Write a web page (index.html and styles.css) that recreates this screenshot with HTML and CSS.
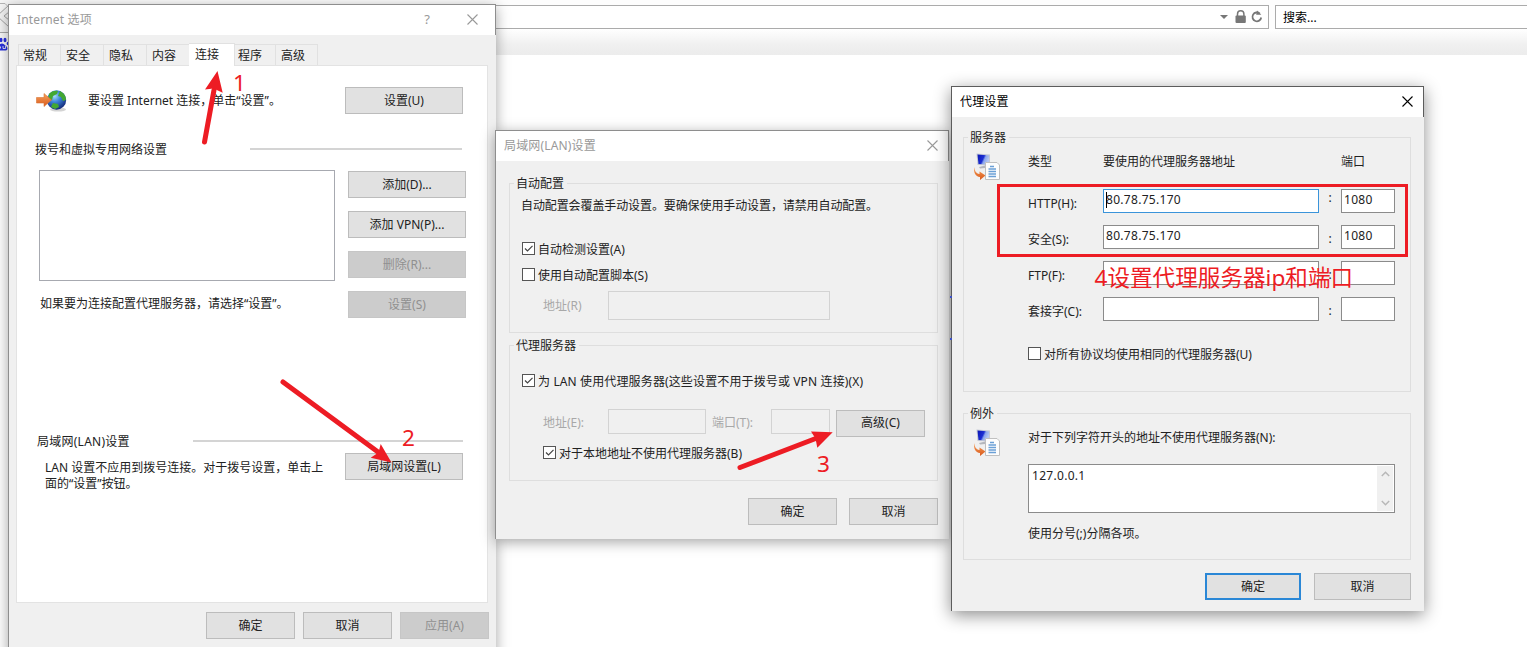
FILE: index.html
```html
<!DOCTYPE html>
<html lang="zh-CN">
<head>
  <meta charset="UTF-8">
  <title>Internet 选项</title>
  <link rel="stylesheet" href="styles.css">
</head>
<body>

  <svg class="defs" width="0" height="0">
    <defs>
      <linearGradient id="screen" x1="0" y1="0" x2="1" y2="0.4">
        <stop offset="0" stop-color="#0a14b4"/>
        <stop offset="0.55" stop-color="#1c2fd2"/>
        <stop offset="0.7" stop-color="#8ba6ec"/>
        <stop offset="1" stop-color="#b3c6f2"/>
      </linearGradient>
      <linearGradient id="orange" x1="0" y1="0" x2="0" y2="1">
        <stop offset="0" stop-color="#f6a25c"/>
        <stop offset="1" stop-color="#d9591c"/>
      </linearGradient>
      <radialGradient id="globe" cx="0.4" cy="0.3" r="0.75">
        <stop offset="0" stop-color="#a8dcf8"/>
        <stop offset="0.4" stop-color="#3d86dc"/>
        <stop offset="1" stop-color="#10206f"/>
      </radialGradient>
      <symbol id="proxy" viewBox="0 0 28 28">
        <path d="M3.500 0.500L17 1.500V12.500L4.500 12Z" fill="#c3c8d4"/>
        <path d="M4.500 1.500L16 2.500V11.500L5.500 11Z" fill="url(#screen)"/>
        <path d="M6 14L12 12.500V15L7 15.500Z" fill="#b4b7bd"/>
        <path d="M1.500 14C1.500 18 3 20.500 6.500 21V18.500L12.500 22.500L7 27V24C2.500 23.500 0 19 1.500 14Z" fill="url(#orange)"/>
        <path d="M12.500 9.500H24L26.500 12V26.500H12.500Z" fill="#fdfdfd" stroke="#c0c0c0"/>
        <path d="M17 13.500H21M15.500 16H23M15.500 18.500H23M15.500 21H23M15.500 23.500H23" stroke="#6ba0d6" stroke-width="1.700"/>
      </symbol>
      <symbol id="close" viewBox="0 0 11 11">
        <path d="M0.500 0.500L10.500 10.500M10.500 0.500L0.500 10.500" fill="none" stroke="currentColor" stroke-width="1.100"/>
      </symbol>
      <symbol id="check" viewBox="0 0 11 11">
        <path d="M2 5.500L4.500 8L9.500 2.800" fill="none" stroke="#444" stroke-width="1.200"/>
      </symbol>
    </defs>
  </svg>

  <!-- Browser behind the dialogs -->
  <div class="browser">
    <div class="toolbar">
      <div class="address">
        <svg width="44" height="16" viewBox="0 0 44 16">
          <path d="M0 6H8L4 10Z" fill="#777"/>
          <path d="M17.500 7V5A3.200 3.200 0 0 1 23.900 5V7" fill="none" stroke="#777" stroke-width="1.500"/>
          <rect x="15.500" y="6.500" width="10.300" height="7.500" rx="1" fill="#777"/>
          <path d="M39.800 4.600A4.400 4.400 0 1 0 41.200 8.500" fill="none" stroke="#777" stroke-width="1.800"/>
          <path d="M37 1.500L41.300 5.800H36.200Z" fill="#777"/>
        </svg>
      </div>
      <div class="search">搜索...</div>
    </div>
    <div class="favorites"></div>
  </div>
  <svg class="nav-button" width="30" height="60" viewBox="0 0 30 60">
    <path d="M0 3.500H5L22 20.500" fill="none" stroke="#b5b5b5"/>
    <path d="M9 5L-3 16L9 27" fill="none" stroke="#a5a5a5"/>
    <path d="M9 12L4 16L9 20" fill="none" stroke="#a5a5a5"/>
    <path d="M0 32.500H9" stroke="#aaa"/>
    <g fill="#2a32df">
      <ellipse cx="1" cy="40" rx="1.500" ry="2.200"/>
      <ellipse cx="5" cy="40" rx="1.500" ry="2.200"/>
      <ellipse cx="8" cy="43.500" rx="1.300" ry="1.800"/>
      <path d="M0 44C3 42.500 4 44.500 6 46C9 48.500 7 51 4.500 50.500H0Z"/>
    </g>
    <path d="M0.500 46.500V48.500M3 46V48.500H5.500V46" fill="none" stroke="#fff" stroke-width="0.800"/>
  </svg>

  <!-- Internet options -->
  <div class="window options">
    <div class="titlebar">
      <span class="title">Internet 选项</span>
      <span class="help">?</span>
      <svg class="close" width="11" height="11"><use href="#close"/></svg>
    </div>
    <div class="tabs">
      <div class="tab">常规</div>
      <div class="tab">安全</div>
      <div class="tab">隐私</div>
      <div class="tab">内容</div>
      <div class="tab active">连接</div>
      <div class="tab">程序</div>
      <div class="tab">高级</div>
    </div>
    <div class="panel">
      <div class="setup">
        <svg width="32" height="24" viewBox="0 0 32 24">
          <ellipse cx="22" cy="20.500" rx="8" ry="2" fill="#aaa" opacity="0.500"/>
          <circle cx="20.500" cy="11" r="9.700" fill="url(#globe)"/>
          <path d="M13 5C15 2 20 1 22 2L21 5L17 7L16 11L12 10ZM24 2C28 4 30 7 30 11L27 12L25 8L22 7ZM17 14L22 15L23 18L19 20L15 18Z" fill="#43a832"/>
          <path d="M0.500 8.500H8V4.500L15.500 11L8 17.500V14H0.500Z" fill="url(#orange)" stroke="#d87434" stroke-width="0.600"/>
        </svg>
        <span class="setup-text">要设置 Internet 连接，单击“设置”。</span>
        <button>设置(U)</button>
      </div>
      <div class="heading dialup">拨号和虚拟专用网络设置<i></i></div>
      <div class="connections">
        <div class="left">
          <div class="listbox"></div>
          <p>如果要为连接配置代理服务器，请选择“设置”。</p>
        </div>
        <div class="stack">
          <button>添加(D)...</button>
          <button>添加 VPN(P)...</button>
          <button disabled>删除(R)...</button>
          <button disabled>设置(S)</button>
        </div>
      </div>
      <div class="heading lan-heading">局域网(LAN)设置<i></i></div>
      <div class="lan-row">
        <p>LAN 设置不应用到拨号连接。对于拨号设置，单击上<br>面的“设置”按钮。</p>
        <button>局域网设置(L)</button>
      </div>
    </div>
    <div class="buttons">
      <button>确定</button>
      <button>取消</button>
      <button disabled>应用(A)</button>
    </div>
  </div>

  <!-- LAN settings -->
  <div class="window lan">
    <div class="titlebar">
      <span class="title">局域网(LAN)设置</span>
      <svg class="close" width="11" height="11"><use href="#close"/></svg>
    </div>
    <div class="content">
      <fieldset class="auto">
        <legend>自动配置</legend>
        <p>自动配置会覆盖手动设置。要确保使用手动设置，请禁用自动配置。</p>
        <div class="option detect"><span class="box"><svg width="11" height="11"><use href="#check"/></svg></span>自动检测设置(A)</div>
        <div class="option script"><span class="box"></span>使用自动配置脚本(S)</div>
        <div class="field script-field"><label>地址(R)</label><span class="input off"></span></div>
      </fieldset>
      <fieldset class="proxy">
        <legend>代理服务器</legend>
        <div class="option use-proxy"><span class="box"><svg width="11" height="11"><use href="#check"/></svg></span>为 LAN 使用代理服务器(这些设置不用于拨号或 VPN 连接)(X)</div>
        <div class="field proxy-field">
          <label>地址(E):</label><span class="input off host"></span>
          <label class="port-label">端口(T):</label><span class="input off port"></span>
          <button>高级(C)</button>
        </div>
        <div class="option local"><span class="box"><svg width="11" height="11"><use href="#check"/></svg></span>对于本地地址不使用代理服务器(B)</div>
      </fieldset>
      <div class="buttons">
        <button>确定</button>
        <button>取消</button>
      </div>
    </div>
  </div>

  <!-- Proxy settings -->
  <div class="window servers">
    <div class="titlebar">
      <span class="title">代理设置</span>
      <svg class="close" width="11" height="11"><use href="#close"/></svg>
    </div>
    <div class="content">
      <fieldset class="server-set">
        <legend>服务器</legend>
        <div class="with-icon">
          <svg width="28" height="28"><use href="#proxy"/></svg>
          <div class="main">
            <div class="grid">
              <span>类型</span><span>要使用的代理服务器地址</span><span></span><span>端口</span>
            </div>
            <div class="grid row">
              <span class="name">HTTP(H):</span><span class="input focus"><i class="caret"></i>80.78.75.170</span><span class="colon up">:</span><span class="input">1080</span>
            </div>
            <div class="grid row">
              <span class="name">安全(S):</span><span class="input">80.78.75.170</span><span class="colon">:</span><span class="input">1080</span>
            </div>
            <div class="grid row">
              <span class="name">FTP(F):</span><span class="input"></span><span class="colon">:</span><span class="input"></span>
            </div>
            <div class="grid row">
              <span class="name">套接字(C):</span><span class="input"></span><span class="colon">:</span><span class="input"></span>
            </div>
            <div class="option same"><span class="box"></span>对所有协议均使用相同的代理服务器(U)</div>
          </div>
        </div>
      </fieldset>
      <fieldset class="except">
        <legend>例外</legend>
        <div class="with-icon">
          <svg width="28" height="28"><use href="#proxy"/></svg>
          <div class="main">
            <p>对于下列字符开头的地址不使用代理服务器(N):</p>
            <div class="textarea">
              <span>127.0.0.1</span>
              <div class="scroll">
                <svg width="9" height="6" viewBox="0 0 9 6"><path d="M0.800 5L4.500 1.300L8.200 5" fill="none" stroke="#b8b8b8" stroke-width="1.500"/></svg>
                <svg width="9" height="6" viewBox="0 0 9 6"><path d="M0.800 1L4.500 4.700L8.200 1" fill="none" stroke="#b8b8b8" stroke-width="1.500"/></svg>
              </div>
            </div>
            <p>使用分号(;)分隔各项。</p>
          </div>
        </div>
      </fieldset>
      <div class="buttons">
        <button class="default">确定</button>
        <button>取消</button>
      </div>
    </div>
  </div>

  <!-- Step markers -->
  <svg class="marks" width="1527" height="647" viewBox="0 0 1527 647">
    <path d="M950 297H952M950 339H952" stroke="#3a4fc4" stroke-width="2"/>
    <g stroke="#ed1c24" stroke-width="5" stroke-linecap="round">
      <path d="M204.500 142L214 90"/>
      <path d="M283 382L378 452"/>
      <path d="M740 467.500L817 438"/>
    </g>
    <g fill="#ed1c24">
      <path d="M217.500 71L205 89.500L213.500 88.500L222.700 92.700Z"/>
      <path d="M391.500 462.500L380.700 444L378.500 452.500L370.700 457.700Z"/>
      <path d="M832.700 432.300L811 431.500L815.500 438.500L817.300 447.700Z"/>
    </g>
    <rect x="998.500" y="185.500" width="408" height="70" fill="none" stroke="#ed1c24" stroke-width="3"/>
    <g class="mark-text">
      <text x="233" y="90.500">1</text>
      <text x="402" y="446">2</text>
      <text x="817" y="471.500">3</text>
      <text x="1094.500" y="286">4设置代理服务器ip和端口</text>
    </g>
  </svg>

</body>
</html>
```
FILE: styles.css
```css
* {
  box-sizing: border-box;
}

body {
  margin: 0;
  width: 1527px;
  height: 647px;
  overflow: hidden;
  position: relative;
  background: #fff;
  color: #222;
  font-family: "Noto Sans", "Noto Sans CJK SC", sans-serif;
  font-size: 12px;
  line-height: 16px;
}

p {
  margin: 0;
}

.defs {
  position: absolute;
}

/* browser */
.toolbar {
  display: flex;
  gap: 6px;
  height: 29px;
  padding-top: 5px;
  background: #fdfdfd;
}

.address,
.search {
  height: 24px;
  border: 1px solid #ababab;
  background: #fff;
}

.address {
  width: 1269px;
  display: flex;
  justify-content: flex-end;
  align-items: center;
  padding-right: 4px;
}

.search {
  flex: 1;
  border-right: 0;
  padding-left: 7px;
  line-height: 23px;
  color: #000;
}

.favorites {
  height: 26px;
  background: linear-gradient(#fff, #f0f0f0 60%, #ececec);
}

.nav-button {
  position: absolute;
  left: 0;
  top: 0;
  background: linear-gradient(#f6f6f6 0, #f6f6f6 32px, #fafafa 33px, #fff 60px);
}

/* windows */
.window {
  position: absolute;
  background: #f0f0f0;
  border-left: 1px solid #8e8e8e;
  box-shadow: 0 3px 13px rgba(0, 0, 0, 0.36);
}

.titlebar {
  height: 31px;
  display: flex;
  align-items: center;
  background: #fff;
  border-top: 1px solid #8e8e8e;
  border-right: 1px solid #8e8e8e;
  padding: 0 10px 0 8px;
  color: #999;
}

.title {
  flex: 1;
  letter-spacing: 0.15px;
}

.close {
  margin-bottom: 2px;
}

.help {
  font-size: 13px;
  margin: 0 37px 2px 0;
}

button {
  width: 89px;
  height: 27px;
  padding: 0;
  border: 1px solid #bcbcbc;
  border-radius: 0;
  background: #e1e1e1;
  color: #222;
  font: inherit;
  line-height: 16px;
}

button:disabled {
  background: #ccc;
  border-color: #c6c6c6;
  color: #909090;
}

button.default {
  border: 2px solid #2a87d6;
}

.buttons {
  display: flex;
  justify-content: flex-end;
}

/* internet options */
.options {
  left: 8px;
  top: 4px;
  width: 488px;
  height: 660px;
}

.options .titlebar {
  padding-right: 17px;
}

.tabs {
  display: flex;
  align-items: flex-end;
  height: 30px;
  padding-left: 9px;
}

.tab {
  width: 43px;
  height: 21px;
  border: 1px solid #e1e1e1;
  border-left-width: 0;
  border-bottom: 0;
  padding-left: 5px;
  line-height: 21px;
}

.tab:first-child {
  border-left-width: 1px;
  padding-left: 4px;
}

.tab.active {
  width: 46px;
  height: 23px;
  margin: 0 -2px -1px -1px;
  padding-left: 6px;
  background: #fff;
  position: relative;
}

.tab:last-child {
  width: 42px;
}

.panel {
  margin-left: 7px;
  width: 472px;
  height: 538px;
  border: 1px solid #e3e3e3;
  background: #fff;
  padding: 21px 21px 0 18px;
}

.setup {
  display: flex;
  align-items: center;
  height: 27px;
}

.setup svg {
  margin-left: 1px;
}

.setup-text {
  flex: 1;
  margin: 1px 0 0 20px;
}

.setup button,
.lan-row button {
  width: 118px;
  margin-right: 3px;
}

.heading {
  display: flex;
  align-items: center;
  justify-content: space-between;
}

.heading i {
  height: 2px;
  margin-bottom: 2px;
  background: #d4d4d4;
}

.dialup {
  margin-top: 28px;
}

.dialup i {
  width: 212px;
  margin-right: 4px;
}

.connections {
  display: flex;
  justify-content: space-between;
  margin-top: 12px;
}

.left {
  padding-left: 4px;
}

.left p {
  margin: 15px 0 0 1px;
}

.listbox {
  width: 296px;
  height: 111px;
  border: 1px solid #a7a9b0;
}

.stack {
  display: flex;
  flex-direction: column;
  gap: 13px;
  padding-top: 1px;
}

.stack button {
  width: 118px;
}

.lan-heading {
  margin: 116px 3px 0 2px;
  letter-spacing: 0.25px;
}

.lan-heading i {
  width: 270px;
}

.lan-row {
  display: flex;
  justify-content: space-between;
  margin: 3px 0 0 10px;
}

.lan-row p {
  margin-top: 7px;
}

.options > .buttons {
  gap: 8px;
  padding: 9px 7px 0 0;
}

/* fieldsets */
.content {
  padding: 14px 11px 0 13px;
}

fieldset {
  margin: 0;
  padding: 0;
  border: 1px solid #dedede;
  min-width: 0;
}

legend {
  margin-left: 4px;
  padding: 0 3px 0 2px;
  height: 16px;
  line-height: 18px;
}

/* label sits a pixel below its box */
.option {
  display: flex;
  align-items: flex-end;
  height: 17px;
  gap: 3px;
}

.box {
  align-self: flex-start;
  width: 13px;
  height: 13px;
  margin-top: 1px;
  border: 1px solid #555;
  background: #fff;
  display: flex;
}

.input {
  display: block;
  height: 24px;
  border: 1px solid #8b8b8b;
  background: #fff;
  padding-left: 2px;
  line-height: 20px;
  letter-spacing: 0.3px;
}

.input.off {
  background: #f0f0f0;
  border-color: #d3d3d3;
}

.input.focus {
  border-color: #3a94da;
  position: relative;
}

.caret {
  position: absolute;
  left: 2px;
  top: 2px;
  width: 1px;
  height: 16px;
  background: #000;
}

.field {
  display: flex;
  align-items: center;
  padding-left: 33px;
}

.field label {
  width: 65px;
  color: #a8a8a8;
}

/* lan settings */
.lan {
  left: 495px;
  top: 130px;
  width: 454px;
  height: 409px;
}

.auto {
  height: 158px;
}

.auto p {
  margin: 7px 0 0 11px;
  letter-spacing: -0.1px;
}

.detect {
  margin: 27px 0 0 12px;
}

.script {
  margin: 9px 0 0 12px;
}

.script-field {
  margin-top: 7px;
}

.script-field .input {
  width: 222px;
  height: 29px;
}

.proxy {
  height: 144px;
  margin-top: 4px;
}

.use-proxy {
  margin: 20px 0 0 12px;
  letter-spacing: 0.13px;
}

.proxy-field {
  margin-top: 19px;
  height: 28px;
}

.proxy-field .input {
  height: 25px;
  margin-bottom: 3px;
}

.proxy-field .host {
  width: 98px;
}

.proxy-field .port {
  width: 59px;
}

.proxy-field .port-label {
  width: 59px;
  margin-left: 6px;
}

.proxy-field button {
  margin-left: 6px;
}

.local {
  margin: 8px 0 0 33px;
}

.lan .buttons {
  gap: 12px;
  margin-top: 17px;
}

/* proxy settings */
.servers {
  left: 951px;
  top: 86px;
  width: 473px;
  height: 525px;
  border-color: #5c5c5c;
  box-shadow: 0 4px 16px rgba(0, 0, 0, 0.45);
}

.servers .titlebar {
  border-color: #5c5c5c;
  color: #000;
}

.servers .content {
  padding: 12px 13px 0 11px;
}

.server-set {
  height: 263px;
}

.with-icon {
  display: flex;
  padding: 8px 15px 0 9px;
}

.main {
  flex: 1;
  margin-left: 27px;
}

.main p {
  padding-top: 1px;
}

.grid {
  display: grid;
  grid-template-columns: 75px 216px 22px 54px;
}

.grid + .row {
  margin-top: 12px;
}

.grid:first-child {
  height: 24px;
  padding-top: 1px;
}

.name {
  padding-top: 7px;
}

.colon {
  text-align: center;
  padding-top: 6px;
}

.colon.up {
  padding-top: 1px;
}

.same {
  margin-top: 25px;
}

.except {
  height: 155px;
  margin-top: 13px;
}

.textarea {
  display: flex;
  justify-content: space-between;
  height: 49px;
  margin: 18px 0 12px;
  border: 1px solid #8b8b8b;
  background: #fff;
  padding: 1px;
  letter-spacing: 0.3px;
}

.textarea span {
  padding: 2px 0 0 2px;
}

.scroll {
  width: 16px;
  display: flex;
  flex-direction: column;
  align-items: center;
  justify-content: space-between;
  padding: 5px 0;
  background: #f0f0f0;
}

.servers .buttons {
  gap: 13px;
  margin-top: 13px;
}

.servers .buttons button {
  width: 97px;
}

.servers .buttons .default {
  width: 96px;
}

/* step markers */
.marks {
  position: absolute;
  left: 0;
  top: 0;
}

.mark-text {
  fill: #ed1c24;
  font-size: 22.6px;
}
```
